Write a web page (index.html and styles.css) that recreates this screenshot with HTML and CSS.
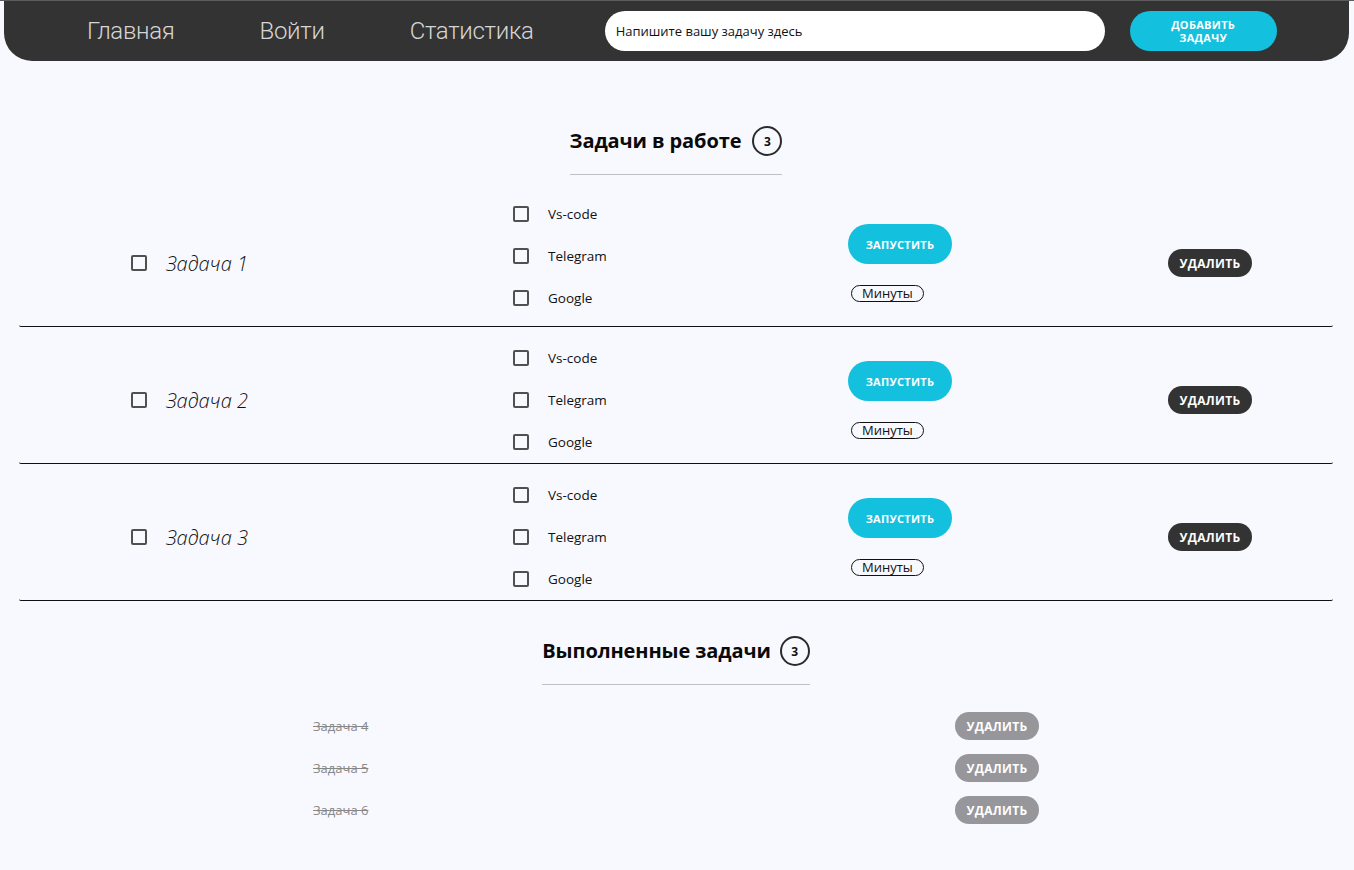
FILE: index.html
```html
<!DOCTYPE html>
<html lang="ru">
<head>
<meta charset="utf-8">
<title>Задачи</title>
<link rel="stylesheet" href="styles.css">
</head>
<body>
<header class="topbar">
  <nav class="nav">
    <a class="nav-link" href="#">Главная</a>
    <a class="nav-link" href="#">Войти</a>
    <a class="nav-link" href="#">Статистика</a>
  </nav>
  <input class="task-input" type="text" placeholder="Напишите вашу задачу здесь">
  <button class="add-btn">ДОБАВИТЬ<br>ЗАДАЧУ</button>
</header>

<main class="page">
  <section class="section">
    <div class="section-head">
      <h2 class="section-title">Задачи в работе</h2>
      <span class="badge">3</span>
    </div>
    <div class="task-list">
      <div class="task">
        <div class="task-main"><input type="checkbox" class="cb"><span class="task-name">Задача 1</span></div>
        <div class="subtasks">
          <label class="subtask"><input type="checkbox" class="cb"><span>Vs-code</span></label>
          <label class="subtask"><input type="checkbox" class="cb"><span>Telegram</span></label>
          <label class="subtask"><input type="checkbox" class="cb"><span>Google</span></label>
        </div>
        <div class="run-col"><button class="run-btn">ЗАПУСТИТЬ</button><span class="minutes">Минуты</span></div>
        <div class="del-col"><button class="del-btn">УДАЛИТЬ</button></div>
      </div>
      <div class="task">
        <div class="task-main"><input type="checkbox" class="cb"><span class="task-name">Задача 2</span></div>
        <div class="subtasks">
          <label class="subtask"><input type="checkbox" class="cb"><span>Vs-code</span></label>
          <label class="subtask"><input type="checkbox" class="cb"><span>Telegram</span></label>
          <label class="subtask"><input type="checkbox" class="cb"><span>Google</span></label>
        </div>
        <div class="run-col"><button class="run-btn">ЗАПУСТИТЬ</button><span class="minutes">Минуты</span></div>
        <div class="del-col"><button class="del-btn">УДАЛИТЬ</button></div>
      </div>
      <div class="task">
        <div class="task-main"><input type="checkbox" class="cb"><span class="task-name">Задача 3</span></div>
        <div class="subtasks">
          <label class="subtask"><input type="checkbox" class="cb"><span>Vs-code</span></label>
          <label class="subtask"><input type="checkbox" class="cb"><span>Telegram</span></label>
          <label class="subtask"><input type="checkbox" class="cb"><span>Google</span></label>
        </div>
        <div class="run-col"><button class="run-btn">ЗАПУСТИТЬ</button><span class="minutes">Минуты</span></div>
        <div class="del-col"><button class="del-btn">УДАЛИТЬ</button></div>
      </div>
    </div>
  </section>

  <section class="section done-section">
    <div class="section-head">
      <h2 class="section-title">Выполненные задачи</h2>
      <span class="badge">3</span>
    </div>
    <div class="done-list">
      <div class="done-item"><span class="done-name">Задача 4</span><button class="del-btn del-btn--muted">УДАЛИТЬ</button></div>
      <div class="done-item"><span class="done-name">Задача 5</span><button class="del-btn del-btn--muted">УДАЛИТЬ</button></div>
      <div class="done-item"><span class="done-name">Задача 6</span><button class="del-btn del-btn--muted">УДАЛИТЬ</button></div>
    </div>
  </section>
</main>
</body>
</html>
```

FILE: styles.css
```css
* { box-sizing: border-box; }

html, body {
  margin: 0;
  padding: 0;
}

body {
  background: #f8f9fe;
  font-family: "Open Sans", "Noto Sans", sans-serif;
  color: #111;
  border-top: 1px solid #5c5c5c;
  min-height: 870px;
}

.topbar {
  margin: -1px 5px 0 4px;
  height: 61px;
  background: #333333;
  border-radius: 0 0 28px 28px;
  display: flex;
  align-items: center;
  padding-left: 83px;
}

.nav {
  display: flex;
  gap: 85px;
}

.nav-link {
  color: #d6d6d6;
  text-decoration: none;
  font-family: "Roboto", sans-serif;
  font-weight: 300;
  font-size: 24px;
  letter-spacing: -0.3px;
}

.task-input {
  margin-left: 71px;
  width: 500px;
  height: 40px;
  border: none;
  border-radius: 20px;
  background: #fff;
  padding: 0 11px;
  font-family: "Open Sans", sans-serif;
  font-size: 13px;
  outline: none;
}

.task-input::placeholder {
  color: #111;
}

.add-btn {
  margin-left: 25px;
  width: 147px;
  height: 40px;
  border: none;
  border-radius: 20px;
  background: #13c0dd;
  color: #fff;
  font-family: "Open Sans", sans-serif;
  font-weight: 700;
  font-size: 11px;
  line-height: 13px;
  letter-spacing: 0.3px;
}

.page {
  padding: 0 21px 0 19px;
}

.section {
  display: flex;
  flex-direction: column;
  align-items: center;
  padding-top: 65px;
}

.done-section {
  padding-top: 35px;
}

.section-head {
  display: flex;
  align-items: center;
  gap: 11px;
  padding-bottom: 18px;
  border-bottom: 1px solid #bfc0c6;
}

.done-section .section-head {
  gap: 9px;
}

.section-title {
  margin: 0;
  font-size: 20px;
  line-height: 30px;
  font-weight: 700;
  color: #0a0a0a;
  letter-spacing: -0.1px;
}

.badge {
  width: 30px;
  height: 30px;
  border: 2px solid #2b2b2b;
  border-radius: 50%;
  display: flex;
  align-items: center;
  justify-content: center;
  font-size: 12px;
  font-weight: 700;
}

.task-list {
  align-self: stretch;
  margin-top: 15px;
}

.task {
  display: grid;
  grid-template-columns: 382px 335px 320px auto;
  align-items: center;
  padding: 10px 0 0 112px;
  border-bottom: 1px solid #111;
  border-radius: 0 0 2px 2px;
}

.cb {
  appearance: none;
  -webkit-appearance: none;
  margin: 0;
  width: 16px;
  height: 16px;
  border: 2px solid #505050;
  border-radius: 2px;
  background: transparent;
  flex: none;
}

.task-main {
  display: flex;
  align-items: center;
  gap: 19px;
}

.task-name {
  font-style: italic;
  font-weight: 300;
  font-size: 20px;
  color: #111;
}

.subtasks {
  display: flex;
  flex-direction: column;
}

.task:first-child .subtasks {
  margin-top: -7px;
  margin-bottom: 7px;
}

.subtask {
  height: 42px;
  display: flex;
  align-items: center;
  gap: 19px;
  font-size: 13.5px;
  color: #111;
}

.run-col {
  display: flex;
  flex-direction: column;
  align-items: flex-start;
  gap: 21px;
}

.run-btn {
  width: 104px;
  height: 40px;
  border: none;
  border-radius: 20px;
  background: #13c0dd;
  color: #fff;
  font-family: "Open Sans", sans-serif;
  font-weight: 700;
  font-size: 11px;
  letter-spacing: 0.3px;
}

.minutes {
  margin-left: 3px;
  height: 17px;
  padding: 0 10px;
  border: 1px solid #111;
  border-radius: 9px;
  font-size: 13px;
  line-height: 15px;
  color: #111;
}

.del-btn {
  width: 84px;
  height: 28px;
  border: none;
  border-radius: 14px;
  background: #333333;
  color: #fff;
  font-family: "Open Sans", sans-serif;
  font-weight: 700;
  font-size: 12px;
  letter-spacing: 0.3px;
}

.del-btn--muted {
  background: #97979b;
}

.done-list {
  width: 726px;
  margin-top: 20px;
  display: flex;
  flex-direction: column;
}

.done-item {
  height: 42px;
  display: flex;
  align-items: center;
  justify-content: space-between;
}

.done-name {
  font-size: 13px;
  color: #888;
  text-decoration: line-through;
}
```
